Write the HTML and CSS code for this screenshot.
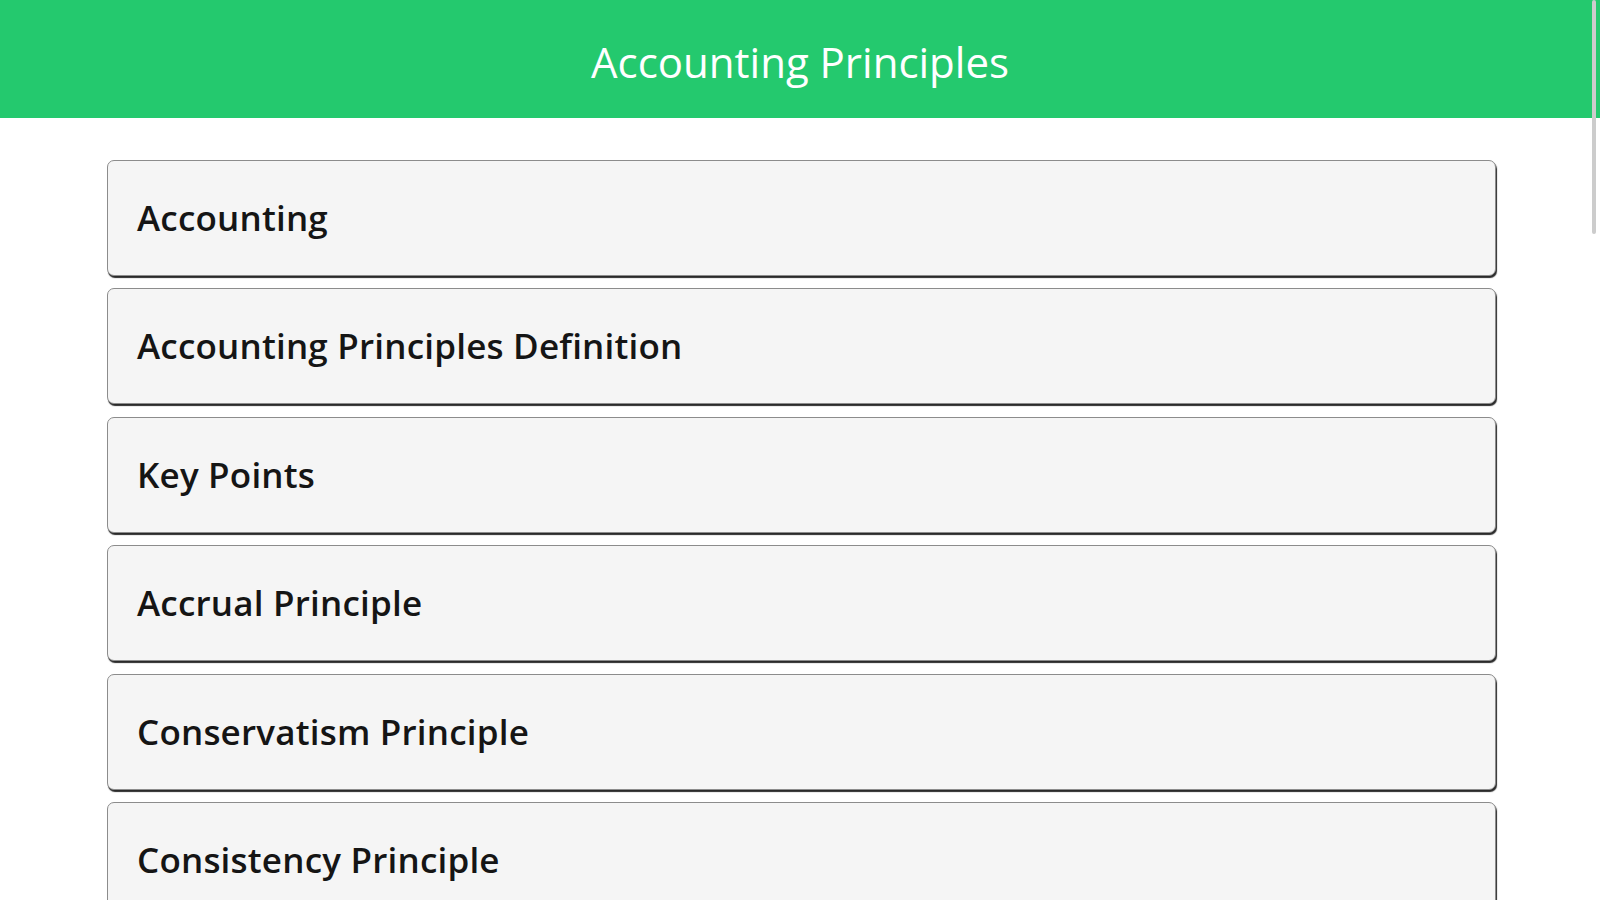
FILE: index.html
```html
<!DOCTYPE html>
<html lang="en">
<head>
<meta charset="utf-8">
<title>Accounting Principles</title>
<link rel="stylesheet" href="styles.css">
</head>
<body>
<header class="topbar">
  <h1 class="title">Accounting Principles</h1>
</header>
<main class="list">
  <div class="item">Accounting</div>
  <div class="item">Accounting Principles Definition</div>
  <div class="item">Key Points</div>
  <div class="item">Accrual Principle</div>
  <div class="item">Conservatism Principle</div>
  <div class="item">Consistency Principle</div>
</main>
<div class="scrollbar"></div>
</body>
</html>
```
FILE: styles.css
```css
html, body {
  margin: 0;
  padding: 0;
  height: 100%;
  overflow: hidden;
  background: #ffffff;
}
body {
  font-family: "Open Sans", "DejaVu Sans", sans-serif;
  position: relative;
}
.topbar {
  height: 118px;
  background: #24c96e;
  display: flex;
  align-items: center;
  justify-content: center;
}
.title {
  margin: 0;
  color: #ffffff;
  font-weight: 400;
  font-size: 42px;
  line-height: 1;
  padding-top: 6px;
}
.list {
  display: flex;
  flex-direction: column;
  gap: 12.4px;
  margin: 42px 104px 0 107px;
}
.item {
  box-sizing: border-box;
  height: 116px;
  flex: none;
  background: #f5f5f5;
  border: 1px solid #8c8c8c;
  border-radius: 7px;
  box-shadow: 1px 2px 1px #2a2a2a;
  display: flex;
  align-items: center;
  padding: 0 0 0 29px;
  font-size: 35px;
  line-height: 1.2;
  font-weight: 600;
  color: #151515;
  letter-spacing: 0.2px;
}
.scrollbar {
  position: absolute;
  top: 0;
  right: 4px;
  width: 4px;
  height: 234px;
  background: #cccccc;
  border-radius: 2px;
}
```
